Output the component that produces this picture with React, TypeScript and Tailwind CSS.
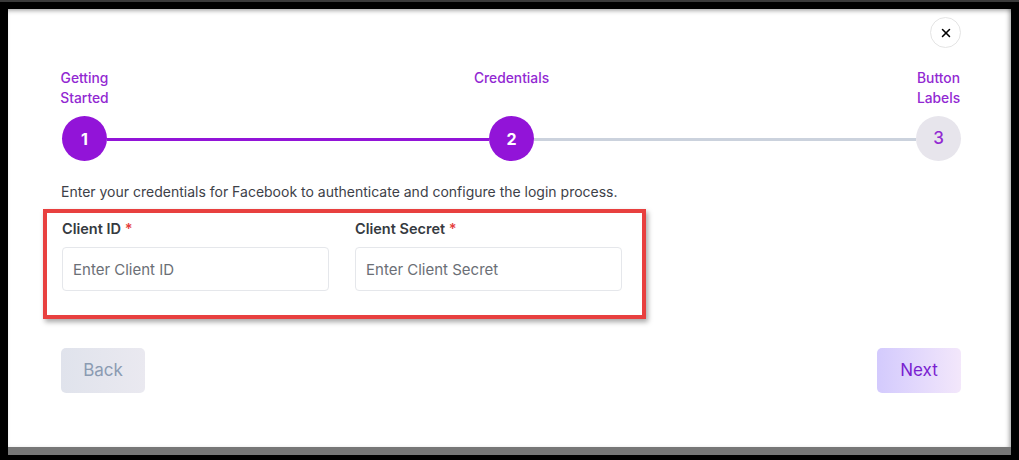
import React, { FC } from 'react';
import { X } from 'lucide-react';

type StepProps = {
  num: number;
  label: string;
  active: boolean;
};

const Step: FC<StepProps> = ({ num, label, active }) => (
  <div className="flex w-[45px] shrink-0 flex-col items-center">
    <div className="h-[48px] shrink-0">
      <p className="w-min text-center text-[13.8px] leading-[20px] font-medium text-[#9228d2]">{label}</p>
    </div>
    <div
      className={
        active
          ? 'flex h-[45px] w-[45px] items-center justify-center rounded-full bg-[#9214d8] text-[16px] font-bold text-white'
          : 'flex h-[45px] w-[45px] items-center justify-center rounded-full bg-[#e7e5ec] text-[17px] font-medium text-[#9228d2]'
      }
    >
      {num}
    </div>
  </div>
);

const Connector: FC<{ done: boolean }> = ({ done }) => (
  <div className={done ? 'mt-[70px] h-[3px] flex-1 bg-[#9214d8]' : 'mt-[70px] h-[3px] flex-1 bg-[#cbd2dd]'} />
);

const Field: FC<{ label: string; placeholder: string }> = ({ label, placeholder }) => (
  <div className="flex flex-col">
    <label className="mb-[9px] text-[14.5px] leading-[18px] font-semibold text-[#353a40]">
      {label} <span className="text-[#e53e3e]">*</span>
    </label>
    <input
      placeholder={placeholder}
      className="h-[44px] w-full rounded-[4px] border border-[#e5e7eb] bg-white px-[10px] text-[15px] text-[#333] placeholder:text-[#6b6f76] outline-none"
    />
  </div>
);

const App: FC = () => {
  return (
    <div className="flex h-[460px] w-[1019px] flex-col overflow-hidden bg-black" style={{ fontFamily: 'Inter, "Noto Sans", sans-serif' }}>
      <div className="h-[2px] shrink-0 bg-[#3a3a3a]" />
      <div className="flex flex-1 flex-col pl-[8px] pr-[8px] pt-[7px]">
        <div className="flex h-[438px] shrink-0 flex-col bg-white pl-[53px] pr-[50px] shadow-[inset_0_4px_4px_-2px_rgba(0,0,0,0.3),inset_-4px_0_4px_-2px_rgba(0,0,0,0.3)]">
          {/* header */}
          <div className="flex h-[39px] items-end justify-end">
            <button className="flex h-[31px] w-[31px] items-center justify-center rounded-full border border-[#e4e4e4] bg-white">
              <X className="h-[14px] w-[14px] text-black" strokeWidth={2.6} />
            </button>
          </div>

          {/* stepper */}
          <div className="mt-[20px] flex items-start pl-[1px]">
            <Step num={1} label="Getting Started" active />
            <Connector done />
            <Step num={2} label="Credentials" active />
            <Connector done={false} />
            <Step num={3} label="Button Labels" active={false} />
          </div>

          <p className="mt-[21px] text-[14px] leading-[20px] text-[#3d4148]">
            Enter your credentials for Facebook to authenticate and configure the login process.
          </p>

          {/* highlighted fields */}
          <div className="-ml-[18px] mt-[7px] w-[603px] border-4 border-[#e8403f] pb-[24px] pl-[15px] pr-[20px] pt-[7px] shadow-[2px_3px_5px_rgba(0,0,0,0.35)]">
            <div className="grid grid-cols-2 gap-[26px]">
              <Field label="Client ID" placeholder="Enter Client ID" />
              <Field label="Client Secret" placeholder="Enter Client Secret" />
            </div>
          </div>

          {/* footer */}
          <div className="mt-[29px] flex justify-between">
            <button className="h-[45px] w-[84px] rounded-[5px] bg-gradient-to-r from-[#e0e3ec] to-[#eae9f0] text-[17px] text-[#8b9bb2]">
              Back
            </button>
            <button className="h-[45px] w-[84px] rounded-[5px] bg-gradient-to-r from-[#d3cafd] to-[#f3e7fb] text-[17px] text-[#7a1fd0]">
              Next
            </button>
          </div>
        </div>
        <div className="h-[8px] shrink-0 bg-[#777]" />
      </div>
    </div>
  );
};

export default App;
